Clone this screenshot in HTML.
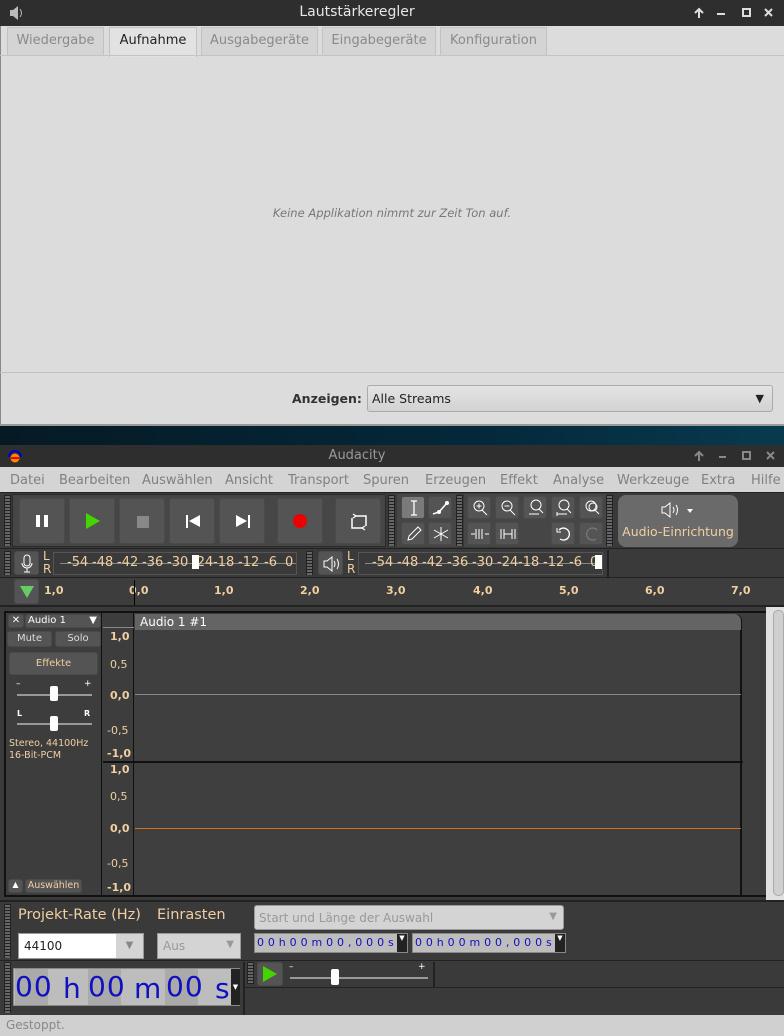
<!DOCTYPE html>
<html><head><meta charset="utf-8"><style>
*{box-sizing:border-box;margin:0;padding:0}
body{width:784px;height:1036px;overflow:hidden;position:relative;background:#3a3a3a;font-family:"DejaVu Sans","Liberation Sans",sans-serif;}
.a{position:absolute}
.btn{position:absolute;background:#545454;border:1px solid #4a4a4a;border-radius:3px}
.grip{position:absolute;width:7px;background:repeating-linear-gradient(#222 0 1px,#666 1px 3px);border-left:1px solid #222;border-right:1px solid #222}
.tab{position:absolute;top:27px;height:28px;background:#d4d4d4;border:1px solid #c2c2c2;border-bottom:none;color:#8a8a8a;font-size:13px;text-align:center;line-height:26px}
.menu span{position:absolute;top:6px;font-size:13px;color:#808080}
.tk{font-size:11px;color:#f0cfa0;font-weight:bold;position:absolute}
.dig{color:#1010c0;white-space:nowrap}
.m{position:absolute;top:555px;color:#f0cfa0;font-size:13px}
svg{position:absolute}
</style></head><body>
<!-- top window -->
<div class="a" style="left:0;top:0;width:784px;height:26px;background:#2e2e2e"></div>
<svg style="left:8px;top:4px" width="16" height="18" viewBox="0 0 16 18"><path d="M2 6h3l5-4v14l-5-4H2z" fill="#bbb"/><path d="M12 5q3 4 0 8" stroke="#bbb" fill="none"/></svg>
<div class="a" style="left:0;top:4px;width:714px;text-align:center;color:#e8e8e8;font-size:14px">Lautstärkeregler</div>
<svg style="left:690px;top:5px" width="90" height="16" viewBox="0 0 90 16"><path d="M9 13V4M5 8l4-4 4 4" stroke="#ddd" stroke-width="2" fill="none"/><path d="M27 9h8" stroke="#ddd" stroke-width="2"/><rect x="53" y="4" width="7" height="7" stroke="#ddd" stroke-width="2" fill="none"/><path d="M75 4l7 7M82 4l-7 7" stroke="#ddd" stroke-width="2"/></svg>
<div class="a" style="left:0;top:26px;width:784px;height:400px;background:#dcdcdc;border-left:1px solid #888"></div>
<div class="tab" style="left:7px;width:97px">Wiedergabe</div>
<div class="tab" style="left:109px;width:88px;background:#e2e2e2;color:#222;top:27px;height:30px">Aufnahme</div>
<div class="tab" style="left:201px;width:117px">Ausgabegeräte</div>
<div class="tab" style="left:322px;width:114px">Eingabegeräte</div>
<div class="tab" style="left:440px;width:107px">Konfiguration</div>
<div class="a" style="left:0;top:55px;width:784px;height:1px;background:#c4c4c4"></div>
<div class="a" style="left:0;top:206px;width:784px;text-align:center;font-style:italic;color:#777;font-size:11.5px">Keine Applikation nimmt zur Zeit Ton auf.</div>
<div class="a" style="left:0;top:372px;width:784px;height:1px;background:#c0c0c0"></div>
<div class="a" style="left:292px;top:391px;font-size:12.5px;font-weight:bold;color:#333">Anzeigen:</div>
<div class="a" style="left:367px;top:385px;width:406px;height:27px;border:1px solid #aaa;border-radius:3px;background:linear-gradient(#e4e4e4,#d2d2d2);font-size:12.5px;color:#222;padding:5px 4px">Alle Streams<span style="position:absolute;right:8px;top:6px;font-size:11px">▼</span></div>
<div class="a" style="left:0;top:424px;width:784px;height:2px;background:#999"></div>
<div class="a" style="left:0;top:426px;width:784px;height:19px;background:linear-gradient(90deg,#061a24,#04283a 60%,#083a4e)"></div>
<!-- audacity -->
<div class="a" style="left:0;top:445px;width:784px;height:22px;background:#2e2e2e"></div>
<svg style="left:7px;top:448px" width="16" height="16" viewBox="0 0 16 16"><path d="M2 9a6 6 0 0112 0" stroke="#00c" stroke-width="2" fill="none"/><circle cx="8" cy="10" r="4.5" fill="#f80"/><rect x="4" y="9" width="8" height="2" fill="#e00"/></svg>
<div class="a" style="left:0;top:448px;width:714px;text-align:center;color:#9a9a9a;font-size:13px">Audacity</div>
<svg style="left:690px;top:449px" width="90" height="14" viewBox="0 0 90 14"><path d="M9 12V3M5 7l4-4 4 4" stroke="#888" stroke-width="2" fill="none"/><path d="M29 8h7" stroke="#888" stroke-width="2"/><rect x="53" y="3" width="7" height="7" stroke="#888" stroke-width="2" fill="none"/><path d="M77 3l7 7M84 3l-7 7" stroke="#888" stroke-width="2"/></svg>
<div class="a menu" style="left:0;top:467px;width:784px;height:25px;background:#d4d4d4">
<span style="left:10px">Datei</span><span style="left:59px">Bearbeiten</span><span style="left:142px">Auswählen</span><span style="left:225px">Ansicht</span><span style="left:288px">Transport</span><span style="left:363px">Spuren</span><span style="left:425px">Erzeugen</span><span style="left:500px">Effekt</span><span style="left:553px">Analyse</span><span style="left:617px">Werkzeuge</span><span style="left:701px">Extra</span><span style="left:751px">Hilfe</span></div>
<div class="a" style="left:0;top:492px;width:784px;height:56px;background:#3a3a3a;border-top:1px solid #222"></div>
<div class="grip" style="left:4px;top:495px;height:51px"></div>
<div class="a" style="left:12px;top:494px;width:374px;height:53px;background:#464646;border:1px solid #2a2a2a"></div>
<div class="btn" style="left:19px;top:498px;width:46px;height:46px"><div class="a" style="left:16px;top:16px;width:4px;height:12px;background:#fff"></div><div class="a" style="left:24px;top:16px;width:4px;height:12px;background:#fff"></div></div>
<div class="btn" style="left:69px;top:498px;width:46px;height:46px"><div class="a" style="left:16px;top:14px;border-left:14px solid #44d400;border-top:8px solid transparent;border-bottom:8px solid transparent"></div></div>
<div class="btn" style="left:119px;top:498px;width:46px;height:46px"><div class="a" style="left:17px;top:17px;width:12px;height:12px;background:#888"></div></div>
<div class="btn" style="left:169px;top:498px;width:46px;height:46px"><div class="a" style="left:16px;top:16px;width:2px;height:13px;background:#fff"></div><div class="a" style="left:19px;top:16px;border-right:11px solid #fff;border-top:6.5px solid transparent;border-bottom:6.5px solid transparent"></div></div>
<div class="btn" style="left:219px;top:498px;width:46px;height:46px"><div class="a" style="left:16px;top:16px;border-left:11px solid #fff;border-top:6.5px solid transparent;border-bottom:6.5px solid transparent"></div><div class="a" style="left:28px;top:16px;width:2px;height:13px;background:#fff"></div></div>
<div class="btn" style="left:277px;top:498px;width:46px;height:46px"><div class="a" style="left:15px;top:15px;width:14px;height:14px;border-radius:50%;background:#e00"></div></div>
<div class="btn" style="left:335px;top:498px;width:46px;height:46px"><svg style="left:14px;top:14px" width="18" height="18" viewBox="0 0 18 18"><path d="M5 3h11v10M13 15H2V5" stroke="#fff" stroke-width="1.5" fill="none"/><path d="M3 1l3 2-3 2M15 13l-3 2 3 2" stroke="#fff" stroke-width="1.2" fill="none"/></svg></div>
<div class="grip" style="left:388px;top:495px;height:51px"></div>
<div class="a" style="left:397px;top:494px;width:60px;height:53px;background:#464646"></div>
<div class="btn" style="left:401px;top:496px;width:24px;height:23px;background:#7a7a7a"><svg style="left:6px;top:3px" width="12" height="16"><path d="M3 1h6M6 1v14M3 15h6" stroke="#fff" stroke-width="1.3"/></svg></div>
<div class="btn" style="left:428px;top:496px;width:24px;height:23px"><svg style="left:2px;top:2px" width="20" height="18"><path d="M2 15l6-2 8-9" stroke="#fff" stroke-width="1.5" fill="none"/><circle cx="8" cy="13" r="2" fill="#fff"/><circle cx="16" cy="4" r="2" fill="#fff"/></svg></div>
<div class="btn" style="left:401px;top:522px;width:24px;height:23px"><svg style="left:4px;top:3px" width="16" height="16"><path d="M2 14l1-4 9-9 3 3-9 9z" stroke="#fff" fill="none"/></svg></div>
<div class="btn" style="left:428px;top:522px;width:24px;height:23px"><svg style="left:4px;top:3px" width="16" height="16"><path d="M8 1v14M1 4l14 8M15 4L1 12" stroke="#fff"/></svg></div>
<div class="grip" style="left:456px;top:495px;height:51px"></div>
<div class="a" style="left:464px;top:494px;width:142px;height:53px;background:#464646"></div>
<div class="btn" style="left:467px;top:496px;width:24px;height:23px"><svg style="left:3px;top:2px" width="18" height="18"><circle cx="8" cy="7" r="5" stroke="#fff" fill="none"/><path d="M11 11l5 5M5.5 7h5M8 4.5v5" stroke="#fff"/></svg></div>
<div class="btn" style="left:495px;top:496px;width:24px;height:23px"><svg style="left:3px;top:2px" width="18" height="18"><circle cx="8" cy="7" r="5" stroke="#fff" fill="none"/><path d="M11 11l5 5M5.5 7h5" stroke="#fff"/></svg></div>
<div class="btn" style="left:523px;top:496px;width:24px;height:23px"><svg style="left:3px;top:2px" width="18" height="18"><circle cx="9" cy="6" r="5" stroke="#fff" fill="none"/><path d="M12 10l4 4M2 15h10" stroke="#fff"/></svg></div>
<div class="btn" style="left:551px;top:496px;width:24px;height:23px"><svg style="left:3px;top:2px" width="18" height="18"><circle cx="9" cy="6" r="5" stroke="#fff" fill="none"/><path d="M12 10l4 4M2 15h10M2 13v4" stroke="#fff"/></svg></div>
<div class="btn" style="left:579px;top:496px;width:24px;height:23px"><svg style="left:3px;top:2px" width="18" height="18"><circle cx="8" cy="7" r="5" stroke="#fff" fill="none"/><circle cx="10" cy="8" r="4" stroke="#fff" fill="none"/><path d="M12 11l4 4" stroke="#fff"/></svg></div>
<div class="btn" style="left:467px;top:522px;width:24px;height:23px"><svg style="left:2px;top:4px" width="20" height="14"><path d="M1 7h4M15 7h4M6 2v10M9 2v10M12 2v10" stroke="#fff"/></svg></div>
<div class="btn" style="left:495px;top:522px;width:24px;height:23px"><svg style="left:2px;top:4px" width="20" height="14"><path d="M3 2v10M6 2v10M14 2v10M17 2v10M6 7h8" stroke="#fff"/></svg></div>
<div class="btn" style="left:551px;top:522px;width:24px;height:23px"><svg style="left:3px;top:2px" width="18" height="18"><path d="M4 5a6 6 0 111 9" stroke="#fff" stroke-width="1.3" fill="none"/><path d="M2 3v4h4" stroke="#fff" fill="none"/></svg></div>
<div class="btn" style="left:579px;top:522px;width:24px;height:23px"><svg style="left:3px;top:2px" width="18" height="18"><path d="M14 5a6 6 0 10-1 9" stroke="#777" stroke-width="1.3" fill="none"/></svg></div>
<div class="grip" style="left:606px;top:495px;height:51px"></div>
<div class="a" style="left:618px;top:495px;width:120px;height:52px;background:#6a6a6a;border-radius:8px;text-align:center;color:#fff;font-size:13px">
<svg style="left:42px;top:6px" width="36" height="18"><path d="M2 6h3l5-4v14l-5-4H2z" stroke="#fff" fill="none"/><path d="M13 6q2 3 0 6M16 4q3 5 0 10" stroke="#fff" fill="none"/><path d="M27 8h6l-3 4z" fill="#fff"/></svg>
<div style="color:#f0cfa0;font-size:12.5px;position:absolute;top:29px;width:120px">Audio-Einrichtung</div></div>
<!-- meters -->
<div class="a" style="left:0;top:548px;width:784px;height:29px;background:#3a3a3a;border-top:1px solid #222"></div>
<div class="grip" style="left:4px;top:551px;height:24px"></div>
<div class="btn" style="left:14px;top:551px;width:25px;height:24px"><svg style="left:5px;top:2px" width="14" height="20"><rect x="4" y="1" width="6" height="11" rx="3" stroke="#fff" fill="none"/><path d="M2 9a5 5 0 0010 0M7 14v4M4 18h6" stroke="#fff" fill="none"/></svg></div>
<div class="a" style="left:43px;top:550px;color:#f0cfa0;font-size:12px;line-height:13px">L<br>R</div>
<div class="a" style="left:53px;top:552px;width:244px;height:23px;border:1px solid #555"></div>
<div class="a" style="left:60px;top:563px;width:236px;height:1px;background:#888"></div>
<span class="m" style="left:67px">-54</span><span class="m" style="left:92px">-48</span><span class="m" style="left:117px">-42</span><span class="m" style="left:142px">-36</span><span class="m" style="left:167px">-30</span><span class="m" style="left:192px">-24</span><span class="m" style="left:213px">-18</span><span class="m" style="left:238px">-12</span><span class="m" style="left:264px">-6</span><span class="m" style="left:285px">0</span>
<div class="a" style="left:192px;top:555px;width:7px;height:14px;background:#fff"></div>
<div class="grip" style="left:306px;top:551px;height:24px"></div>
<div class="btn" style="left:318px;top:551px;width:25px;height:24px"><svg style="left:3px;top:3px" width="20" height="18"><path d="M2 6h3l5-4v14l-5-4H2z" stroke="#fff" fill="none"/><path d="M12 6q2 3 0 6M15 4q3 5 0 10" stroke="#fff" fill="none"/></svg></div>
<div class="a" style="left:347px;top:550px;color:#f0cfa0;font-size:12px;line-height:13px">L<br>R</div>
<div class="a" style="left:358px;top:552px;width:245px;height:23px;border:1px solid #555"></div>
<div class="a" style="left:365px;top:563px;width:236px;height:1px;background:#888"></div>
<span class="m" style="left:372px">-54</span><span class="m" style="left:397px">-48</span><span class="m" style="left:422px">-42</span><span class="m" style="left:447px">-36</span><span class="m" style="left:472px">-30</span><span class="m" style="left:497px">-24</span><span class="m" style="left:518px">-18</span><span class="m" style="left:543px">-12</span><span class="m" style="left:569px">-6</span><span class="m" style="left:590px">0</span>
<div class="a" style="left:595px;top:555px;width:7px;height:14px;background:#fff"></div>
<div class="a" style="left:607px;top:550px;width:2px;height:27px;background:#222"></div>
<!-- ruler -->
<div class="a" style="left:0;top:577px;width:784px;height:30px;background:#3d3d3d;border-top:1px solid #222;border-bottom:2px solid #222"></div>
<div class="btn" style="left:14px;top:579px;width:25px;height:25px"><div class="a" style="left:5px;top:6px;border-top:12px solid #6c6;border-left:7px solid transparent;border-right:7px solid transparent"></div></div>
<div class="tk" style="left:44px;top:584px">1,0</div><div class="tk" style="left:129px;top:584px">0,0</div><div class="tk" style="left:214px;top:584px">1,0</div><div class="tk" style="left:300px;top:584px">2,0</div><div class="tk" style="left:386px;top:584px">3,0</div><div class="tk" style="left:473px;top:584px">4,0</div><div class="tk" style="left:559px;top:584px">5,0</div><div class="tk" style="left:645px;top:584px">6,0</div><div class="tk" style="left:731px;top:584px">7,0</div>
<div class="a" style="left:134px;top:580px;width:1px;height:25px;background:#000"></div>
<!-- tracks -->
<div class="a" style="left:0;top:607px;width:784px;height:293px;background:#3a3a3a"></div>
<div class="a" style="left:4px;top:611px;width:764px;height:286px;border:2px solid #111;background:#3d3d3d"></div>
<div class="a" style="left:6px;top:613px;width:96px;height:282px;background:#3d3d3d;border-right:1px solid #111"></div>
<div class="btn" style="left:8px;top:614px;width:16px;height:14px;color:#fff;font-size:10px;text-align:center;line-height:12px;font-weight:bold">✕</div>
<div class="btn" style="left:25px;top:614px;width:76px;height:14px;color:#fff;font-size:10px;line-height:12px;padding-left:2px">Audio 1<span style="position:absolute;right:3px;font-size:10px">▼</span></div>
<div class="btn" style="left:7px;top:631px;width:45px;height:16px;color:#ddd;font-size:10px;text-align:center;line-height:14px">Mute</div>
<div class="btn" style="left:55px;top:631px;width:46px;height:16px;color:#ddd;font-size:10px;text-align:center;line-height:14px">Solo</div>
<div class="btn" style="left:9px;top:652px;width:89px;height:23px;color:#f0cfa0;font-size:10px;text-align:center;line-height:21px">Effekte</div>
<div class="a" style="left:16px;top:679px;color:#fff;font-size:9px">–</div><div class="a" style="left:84px;top:679px;color:#fff;font-size:9px">+</div>
<div class="a" style="left:17px;top:694px;width:75px;height:2px;background:#999"></div><div class="a" style="left:50px;top:686px;width:8px;height:15px;background:#fff;border-radius:2px"></div>
<div class="a" style="left:17px;top:709px;color:#fff;font-size:8px;font-weight:bold">L</div><div class="a" style="left:84px;top:709px;color:#fff;font-size:8px;font-weight:bold">R</div>
<div class="a" style="left:17px;top:723px;width:75px;height:2px;background:#999"></div><div class="a" style="left:50px;top:716px;width:8px;height:15px;background:#fff;border-radius:2px"></div>
<div class="a" style="left:9px;top:738px;color:#f0cfa0;font-size:9.5px;line-height:12px">Stereo, 44100Hz<br>16-Bit-PCM</div>
<div class="btn" style="left:8px;top:879px;width:15px;height:14px;color:#fff;font-size:8px;text-align:center">▲</div>
<div class="btn" style="left:25px;top:879px;width:57px;height:14px;color:#f0cfa0;font-size:9.5px;text-align:center;line-height:12px">Auswählen</div>
<div class="a" style="left:103px;top:613px;width:31px;height:282px;background:#3d3d3d;border-right:1px solid #111"></div>
<div class="a" style="left:103px;top:627px;width:31px;height:1px;background:#888"></div>
<div class="tk" style="left:110px;top:630px">1,0</div><div class="a" style="left:110px;top:658px;color:#f0cfa0;font-size:11px">0,5</div><div class="tk" style="left:110px;top:689px">0,0</div><div class="a" style="left:107px;top:724px;color:#f0cfa0;font-size:11px">-0,5</div><div class="tk" style="left:107px;top:747px">-1,0</div>
<div class="tk" style="left:110px;top:763px">1,0</div><div class="a" style="left:110px;top:790px;color:#f0cfa0;font-size:11px">0,5</div><div class="tk" style="left:110px;top:822px">0,0</div><div class="a" style="left:107px;top:857px;color:#f0cfa0;font-size:11px">-0,5</div><div class="tk" style="left:107px;top:881px">-1,0</div>
<div class="a" style="left:135px;top:614px;width:607px;height:281px;background:#3f3f3f;border-right:2px solid #111;border-radius:0 7px 0 0"></div>
<div class="a" style="left:135px;top:614px;width:606px;height:16px;background:#646464;border-radius:0 7px 0 0;color:#fff;font-size:12px;padding-left:5px;line-height:16px">Audio 1 #1</div>
<div class="a" style="left:135px;top:694px;width:606px;height:1px;background:#888"></div>
<div class="a" style="left:103px;top:761px;width:640px;height:2px;background:#111"></div>
<div class="a" style="left:135px;top:828px;width:606px;height:1px;background:#d07020"></div>
<div class="a" style="left:766px;top:607px;width:18px;height:293px;background:#e0e0e0"></div>
<div class="a" style="left:773px;top:610px;width:11px;height:286px;background:#cfcfcf;border:1px solid #aaa;border-radius:5px"></div>
<!-- bottom -->
<div class="a" style="left:0;top:900px;width:784px;height:115px;background:#3a3a3a;border-top:2px solid #222"></div>
<div class="grip" style="left:4px;top:904px;height:54px"></div>
<div class="a" style="left:18px;top:907px;color:#f0cfa0;font-size:14.5px">Projekt-Rate (Hz)</div>
<div class="a" style="left:157px;top:907px;color:#f0cfa0;font-size:14.5px">Einrasten</div>
<div class="a" style="left:18px;top:933px;width:126px;height:26px;background:#fff;border:1px solid #999;font-size:12px;padding:5px 5px;color:#222">44100<div class="a" style="right:0;top:0;width:27px;height:24px;background:#d4d4d4;color:#888;text-align:center;line-height:24px;font-size:10px">▼</div></div>
<div class="a" style="left:157px;top:933px;width:84px;height:26px;background:#d4d4d4;border:1px solid #999;font-size:12px;padding:5px 5px;color:#999">Aus<span style="position:absolute;right:6px;font-size:10px">▼</span></div>
<div class="a" style="left:254px;top:905px;width:310px;height:25px;background:#d4d4d4;border:1px solid #999;border-radius:3px;font-size:12px;padding:5px 4px;color:#999">Start und Länge der Auswahl<span style="position:absolute;right:6px;font-size:10px">▼</span></div>
<div class="a dig" style="left:254px;top:933px;width:154px;height:20px;background:#bdbdbd;border:1px solid #888;font-size:11px;padding:2px 2px;letter-spacing:3.9px">00h00m00,000s</div>
<div class="a" style="left:397px;top:934px;width:10px;height:18px;background:#222;color:#fff;font-size:7px;text-align:center">▼</div>
<div class="a dig" style="left:412px;top:933px;width:154px;height:20px;background:#bdbdbd;border:1px solid #888;font-size:11px;padding:2px 2px;letter-spacing:3.9px">00h00m00,000s</div>
<div class="a" style="left:555px;top:934px;width:10px;height:18px;background:#222;color:#fff;font-size:7px;text-align:center">▼</div>
<div class="a" style="left:0;top:960px;width:784px;height:1px;background:#222"></div>
<div class="grip" style="left:4px;top:962px;height:51px"></div>
<div class="a" style="left:13px;top:968px;width:227px;height:38px;background:#bdbdbd;border:1px solid #888"></div>
<div class="a" style="left:15px;top:969px;width:33px;height:36px;background:#aaa"></div>
<div class="a" style="left:88px;top:969px;width:33px;height:36px;background:#aaa"></div>
<div class="a" style="left:165px;top:969px;width:33px;height:36px;background:#aaa"></div>
<div class="a dig" style="left:15px;top:968px;font-size:28px;line-height:38px;letter-spacing:1px">00</div>
<div class="a dig" style="left:63px;top:970px;font-size:28px;line-height:38px">h</div>
<div class="a dig" style="left:88px;top:968px;font-size:28px;line-height:38px;letter-spacing:1px">00</div>
<div class="a dig" style="left:134px;top:970px;font-size:28px;line-height:38px">m</div>
<div class="a dig" style="left:166px;top:968px;font-size:28px;line-height:38px;letter-spacing:1px">00</div>
<div class="a dig" style="left:215px;top:970px;font-size:28px;line-height:38px">s</div>
<div class="a" style="left:231px;top:969px;width:9px;height:36px;background:#222;color:#fff;font-size:7px;text-align:center;line-height:36px">▼</div>
<div class="a" style="left:243px;top:962px;width:2px;height:53px;background:#222"></div>
<div class="grip" style="left:247px;top:962px;height:22px"></div>
<div class="btn" style="left:257px;top:962px;width:26px;height:24px"><div class="a" style="left:5px;top:3px;border-left:14px solid #44d400;border-top:8px solid transparent;border-bottom:8px solid transparent"></div></div>
<div class="a" style="left:289px;top:962px;color:#fff;font-size:9px">–</div><div class="a" style="left:418px;top:962px;color:#fff;font-size:9px">+</div>
<div class="a" style="left:290px;top:977px;width:138px;height:2px;background:#999"></div><div class="a" style="left:331px;top:969px;width:8px;height:16px;background:#fff;border-radius:2px"></div>
<div class="a" style="left:433px;top:962px;width:2px;height:25px;background:#222"></div>
<div class="a" style="left:245px;top:987px;width:539px;height:1px;background:#222"></div>
<div class="a" style="left:0;top:1015px;width:784px;height:21px;background:#d0d0d0;color:#888;font-size:12px;padding:3px 6px">Gestoppt.</div>
</body></html>
